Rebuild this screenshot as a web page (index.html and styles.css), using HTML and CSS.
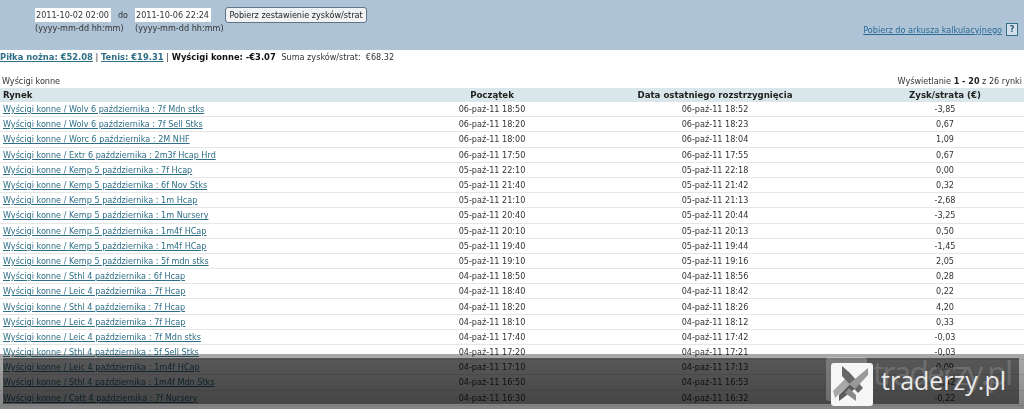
FILE: index.html
```html
<!DOCTYPE html>
<html lang="pl">
<head>
<meta charset="utf-8">
<title>Zestawienie zysków/strat</title>
<link rel="stylesheet" href="styles.css">
</head>
<body>
<div class="page">
<header class="band">
  <form class="range">
    <div class="field">
      <span class="input">2011-10-02 02:00</span>
      <span class="hint">(yyyy-mm-dd hh:mm)</span>
    </div>
    <span class="do">do</span>
    <div class="field">
      <span class="input">2011-10-06 22:24</span>
      <span class="hint">(yyyy-mm-dd hh:mm)</span>
    </div>
    <button class="btn" type="button">Pobierz zestawienie zysków/strat</button>
  </form>
  <div class="export">
    <a href="#">Pobierz do arkusza kalkulacyjnego</a>
    <span class="help">?</span>
  </div>
</header>
<p class="summary"><a href="#">Piłka nożna: €52.08</a> | <a href="#">Tenis: €19.31</a> | <b>Wyścigi konne: -€3.07</b> <span class="total">Suma zysków/strat:&nbsp; €68.32</span></p>
<div class="caption"><span>Wyścigi konne</span><span>Wyświetlanie <b>1 - 20</b> z 26 rynki</span></div>
<table>
<colgroup><col class="c1"><col class="c2"><col class="c3"><col class="c4"></colgroup>
<thead><tr><th class="left">Rynek</th><th>Początek</th><th>Data ostatniego rozstrzygnięcia</th><th>Zysk/strata (€)</th></tr></thead>
<tbody>
<tr><td class="left"><a href="#">Wyścigi konne / Wolv 6 października : 7f Mdn stks</a></td><td>06-paź-11 18:50</td><td>06-paź-11 18:52</td><td>-3,85</td></tr>
<tr><td class="left"><a href="#">Wyścigi konne / Wolv 6 października : 7f Sell Stks</a></td><td>06-paź-11 18:20</td><td>06-paź-11 18:23</td><td>0,67</td></tr>
<tr><td class="left"><a href="#">Wyścigi konne / Worc 6 października : 2M NHF</a></td><td>06-paź-11 18:00</td><td>06-paź-11 18:04</td><td>1,09</td></tr>
<tr><td class="left"><a href="#">Wyścigi konne / Extr 6 października : 2m3f Hcap Hrd</a></td><td>06-paź-11 17:50</td><td>06-paź-11 17:55</td><td>0,67</td></tr>
<tr><td class="left"><a href="#">Wyścigi konne / Kemp 5 października : 7f Hcap</a></td><td>05-paź-11 22:10</td><td>05-paź-11 22:18</td><td>0,00</td></tr>
<tr><td class="left"><a href="#">Wyścigi konne / Kemp 5 października : 6f Nov Stks</a></td><td>05-paź-11 21:40</td><td>05-paź-11 21:42</td><td>0,32</td></tr>
<tr><td class="left"><a href="#">Wyścigi konne / Kemp 5 października : 1m Hcap</a></td><td>05-paź-11 21:10</td><td>05-paź-11 21:13</td><td>-2,68</td></tr>
<tr><td class="left"><a href="#">Wyścigi konne / Kemp 5 października : 1m Nursery</a></td><td>05-paź-11 20:40</td><td>05-paź-11 20:44</td><td>-3,25</td></tr>
<tr><td class="left"><a href="#">Wyścigi konne / Kemp 5 października : 1m4f HCap</a></td><td>05-paź-11 20:10</td><td>05-paź-11 20:13</td><td>0,50</td></tr>
<tr><td class="left"><a href="#">Wyścigi konne / Kemp 5 października : 1m4f HCap</a></td><td>05-paź-11 19:40</td><td>05-paź-11 19:44</td><td>-1,45</td></tr>
<tr><td class="left"><a href="#">Wyścigi konne / Kemp 5 października : 5f mdn stks</a></td><td>05-paź-11 19:10</td><td>05-paź-11 19:16</td><td>2,05</td></tr>
<tr><td class="left"><a href="#">Wyścigi konne / Sthl 4 października : 6f Hcap</a></td><td>04-paź-11 18:50</td><td>04-paź-11 18:56</td><td>0,28</td></tr>
<tr><td class="left"><a href="#">Wyścigi konne / Leic 4 października : 7f Hcap</a></td><td>04-paź-11 18:40</td><td>04-paź-11 18:42</td><td>0,22</td></tr>
<tr><td class="left"><a href="#">Wyścigi konne / Sthl 4 października : 7f Hcap</a></td><td>04-paź-11 18:20</td><td>04-paź-11 18:26</td><td>4,20</td></tr>
<tr><td class="left"><a href="#">Wyścigi konne / Leic 4 października : 7f Hcap</a></td><td>04-paź-11 18:10</td><td>04-paź-11 18:12</td><td>0,33</td></tr>
<tr><td class="left"><a href="#">Wyścigi konne / Leic 4 października : 7f Mdn stks</a></td><td>04-paź-11 17:40</td><td>04-paź-11 17:42</td><td>-0,03</td></tr>
<tr><td class="left"><a href="#">Wyścigi konne / Sthl 4 października : 5f Sell Stks</a></td><td>04-paź-11 17:20</td><td>04-paź-11 17:21</td><td>-0,03</td></tr>
<tr><td class="left"><a href="#">Wyścigi konne / Leic 4 października : 1m4f HCap</a></td><td>04-paź-11 17:10</td><td>04-paź-11 17:13</td><td>0,09</td></tr>
<tr><td class="left"><a href="#">Wyścigi konne / Sthl 4 października : 1m4f Mdn Stks</a></td><td>04-paź-11 16:50</td><td>04-paź-11 16:53</td><td>-0,42</td></tr>
<tr><td class="left"><a href="#">Wyścigi konne / Catt 4 października : 7f Nursery</a></td><td>04-paź-11 16:30</td><td>04-paź-11 16:32</td><td>-0,22</td></tr>
</tbody>
</table>
</div>
<div class="shade">
  <div class="strip"></div>
  <div class="ghost-box"></div>
  <svg class="logo" viewBox="0 0 42 43" width="42" height="43" aria-hidden="true">
    <rect width="42" height="43" rx="3" fill="#f6f6f6"/>
    <path d="M2 28 L15 15 L20 20 L4 35 Z" fill="#a8a8a8"/>
    <path d="M8 38 L8 32 L20 20 L25 25 Z" fill="#5a5a5a"/>
    <path d="M25 38 L25 32 L18 25 L14 30 Z" fill="#8a8a8a"/>
    <path d="M11 3 L19 10 L32 25 L27 30 L11 13 Z" fill="#666"/>
    <path d="M37 5 L37 12 L24 26 L18 21 Z" fill="#999"/>
  </svg>
  <span class="ghost">traderzy.pl</span>
  <span class="brand">traderzy.pl</span>
</div>
</body>
</html>
```
FILE: styles.css
```css
html, body { margin: 0; padding: 0; height: 409px; overflow: hidden; background: #fff; }
body { position: relative; font: 9px "DejaVu Sans", Verdana, sans-serif; font-stretch: condensed; color: #333; }
.page { filter: blur(0.35px); }
a { color: #2f6f87; }

.band { height: 50px; background: #aec4d6; display: flex; justify-content: space-between; box-sizing: border-box; padding: 7px 6px 0 35px; }
.range { display: flex; align-items: flex-start; }
.field { display: flex; flex-direction: column; width: 76px; }
.input { background: #fff; height: 14px; line-height: 14px; margin-top: 1px; padding-left: 1px; color: #333; white-space: nowrap; }
.hint { margin-top: 1px; white-space: nowrap; color: #333; }
.do { width: 24px; text-align: center; margin-top: 3px; }
.btn { margin-left: 14px; width: 142px; height: 16px; padding: 0; font: inherit; font-stretch: condensed; color: #222; background: #f0f2f4; border: 1px solid #5f7488; border-radius: 3px; white-space: nowrap; }
.export { display: flex; align-items: center; gap: 4px; align-self: flex-start; margin-top: 16px; }
.export a { color: #2a6a96; }
.help { width: 10px; height: 11px; border: 1px solid #2f6f87; text-align: center; line-height: 11px; font-weight: bold; color: #2a5a78; background: #d3dfe9; }

.summary { margin: 0; height: 14px; line-height: 14px; font-size: 9.3px; white-space: nowrap; }
.summary a { font-weight: bold; }
.summary b { color: #111; }
.total { font-size: 9px; margin-left: 3px; }

.caption { display: flex; justify-content: space-between; margin-top: 10px; height: 14px; line-height: 14px; padding: 0 2px; }
.caption b { color: #222; }

table { width: 1024px; border-collapse: collapse; table-layout: fixed; }
.c1 { width: 420px; } .c2 { width: 144px; } .c3 { width: 302px; } .c4 { width: 158px; }
th { background: #d9e6ea; height: 14px; padding: 0; text-align: center; color: #222; font-size: 8.6px; font-stretch: normal; font-weight: bold; white-space: nowrap; }
td { height: 14.2px; padding: 0; text-align: center; border-bottom: 1px solid #e6e6e6; white-space: nowrap; line-height: 14px; }
.left { text-align: left; padding-left: 3px; }

.shade { position: absolute; left: 0; right: 0; top: 354px; height: 55px; background: linear-gradient(rgba(0,0,0,.34) 0 8%, rgba(0,0,0,.48) 92%); }
.strip { position: absolute; left: 3px; right: 5px; top: 4px; height: 46px; background: rgba(0,0,0,.48); }
.ghost-box { position: absolute; left: 826px; top: 3px; width: 41px; height: 44px; border-radius: 3px; background: rgba(255,255,255,.22); }
.logo { position: absolute; left: 831px; top: 9px; }
.brand, .ghost { position: absolute; white-space: nowrap; font-family: "Open Sans", sans-serif; font-stretch: normal; line-height: 1; }
.brand { left: 881px; top: 14px; font-size: 25px; color: rgba(255,255,255,.9); }
.ghost { left: 873px; top: 3px; font-size: 32px; letter-spacing: -2px; color: rgba(255,255,255,.18); }
```
